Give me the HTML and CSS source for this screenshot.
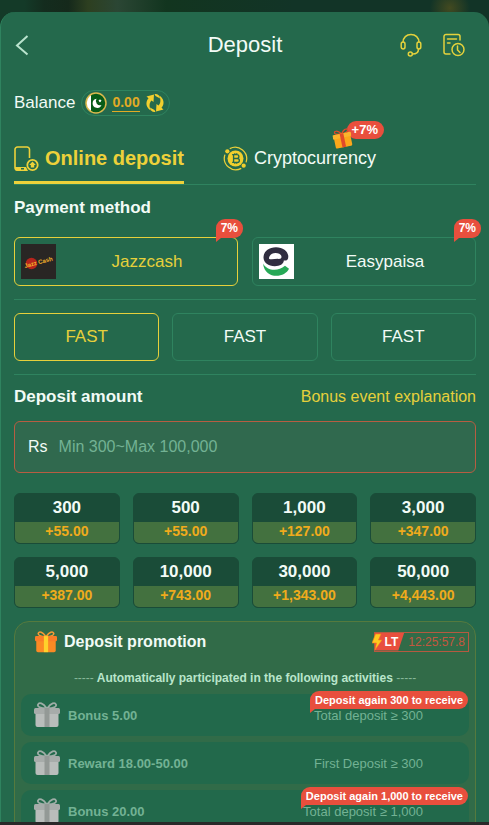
FILE: index.html
```
<!DOCTYPE html>
<html lang="en">

<head>
    <meta charset="UTF-8">
    <meta name="viewport" content="width=device-width, initial-scale=1.0">
    <title>Deposit</title>

    <link rel="stylesheet" href="styles.css">

</head>

<body>
    <svg class="sprite" aria-hidden="true">
        <symbol id="gift" viewBox="0 0 26 26">
            <path d="M12.500 6C9 1 5 0 4 2.500c-1 2.500 3 4 8.500 4zM13.500 6C17 1 21 0 22 2.500c1 2.500-3 4-8.500 4z" fill="none" stroke="currentColor" stroke-width="1.800" />
            <path d="M1.500 11h23v12a2 2 0 0 1-2 2h-19a2 2 0 0 1-2-2z" fill="var(--box)" />
            <rect x="0" y="6" width="26" height="6" rx="1.500" fill="var(--lid)" />
            <rect x="10.500" y="6" width="5" height="19" fill="var(--ribbon)" />
        </symbol>
    </svg>

    <main class="sheet">
        <header class="header">
            <button class="icon-btn" type="button" aria-label="Back">
                <svg width="16" height="22" viewBox="0 0 16 22"><path d="M13.500 2 3 11.500l10.500 9" fill="none" stroke="#b9e3cd" stroke-width="2" /></svg>
            </button>
            <h1>Deposit</h1>
            <div class="header-actions">
                <button class="icon-btn" type="button" aria-label="Support">
                    <svg width="22" height="24" viewBox="0 0 22 24" fill="none" stroke="#e3d13c" stroke-width="1.500">
                        <path d="M3 9.500C3 4.500 6.500 1.500 11 1.500s8 3 8 8" />
                        <rect x="1.200" y="9" width="3.800" height="7" rx="1.900" />
                        <rect x="17" y="9" width="3.800" height="7" rx="1.900" />
                        <path d="M18.500 16c0 3.500-1.500 5-6 5" />
                        <circle cx="10.300" cy="21" r="2" />
                    </svg>
                </button>
                <button class="icon-btn" type="button" aria-label="Deposit history">
                    <svg width="22" height="24" viewBox="0 0 22 24" fill="none" stroke="#e3d13c" stroke-width="1.500" stroke-linecap="round">
                        <path d="M7 21H3a2 2 0 0 1-2-2V3.500a2 2 0 0 1 2-2h12a2 2 0 0 1 2 2V7" />
                        <path d="M4.500 6h9M4.500 10H7" />
                        <circle cx="15" cy="16.500" r="6" />
                        <path d="M14.500 13v4l2.500 2.500" />
                    </svg>
                </button>
            </div>
        </header>

        <section class="balance">
            <span>Balance</span>
            <div class="balance-pill">
                <svg width="22" height="22" viewBox="0 0 22 22">
                    <circle cx="11" cy="11" r="10" fill="#075c18" />
                    <path d="M6 2.300v17.400A10 10 0 0 1 6 2.300z" fill="#fff" />
                    <path d="M11.500 6.800a4.600 4.600 0 1 0 5 6.200 4.200 4.200 0 0 1-5-6.200z" fill="#fff" />
                    <path d="m15 7 .5 1.100 1.200.1-.9.900.2 1.200-1-.6-1 .6.200-1.200-.9-.9 1.200-.1z" fill="#fff" />
                    <circle cx="11" cy="11" r="10" fill="none" stroke="#d9b84c" stroke-width="1.500" />
                </svg>
                <a class="balance-value" href="#">0.00</a>
                <button class="icon-btn" type="button" aria-label="Refresh balance">
                    <svg width="20" height="20" viewBox="0 0 20 20" fill="#f2cf2e">
                        <path d="M6 17.500C1 15 0 9 3.500 5.200L1.500 3.500 9 1.500 8.500 9 6.500 7.500C4 10 4 14 6 17.500z" />
                        <path d="M14 2.500c5 2.500 6 8.500 2.500 12.300l2 1.700-7.500 2 .5-7.500 2 1.500C16 10 16 6 14 2.500z" />
                        <path d="M9.500 1c3-.5 5.500 1.500 5.500 4.500L10.500 3z" />
                        <path d="M10.500 19c-3 .5-5.500-1.500-5.500-4.500L9.500 17z" />
                    </svg>
                </button>
            </div>
        </section>

        <nav class="tabs">
            <button class="tab active" type="button">
                <svg width="25" height="26" viewBox="0 0 25 26">
                    <path d="M12 24H3.500A2.500 2.500 0 0 1 1 21.500v-18A2.500 2.500 0 0 1 3.500 1h9.500A2.500 2.500 0 0 1 15.500 3.500V12" fill="none" stroke="#edd13a" stroke-width="1.600" />
                    <path d="M1 21h11l2 4H3a2 2 0 0 1-2-2z" fill="#edd13a" />
                    <rect x="7" y="22" width="3" height="1.500" fill="#24694c" />
                    <circle cx="18.500" cy="19" r="5.200" fill="none" stroke="#edd13a" stroke-width="1.800" />
                    <path d="m18.500 15.500 3.300 3.500h-1.600v2.500h-3.400V19h-1.600z" fill="#edd13a" />
                </svg>
                <span>Online deposit</span>
            </button>
            <button class="tab" type="button">
                <svg width="25" height="25" viewBox="0 0 26 26">
                    <path d="M7 2.700A12 12 0 0 1 24 17M19 23.300A12 12 0 0 1 2 9" fill="none" stroke="#e9d03a" stroke-width="1.300" />
                    <circle cx="13" cy="13" r="8.300" fill="#f0cf2d" />
                    <circle cx="4.500" cy="5.500" r="2.200" fill="#f0cf2d" />
                    <circle cx="21.500" cy="20.500" r="2.200" fill="#f0cf2d" />
                    <path d="M9.500 9h5q2 0 2 2t-2 2h-3.500 4q2 0 2 2t-2 2H9.500M11 9v8M12.300 7.500V9M14.300 7.500V9M12.300 17v1.500M14.300 17v1.500" fill="none" stroke="#24694c" stroke-width="1.400" />
                </svg>
                <span>Cryptocurrency</span>
                <span class="tab-badge">
                    <svg class="gift-small" width="19" height="19"><use href="#gift" /></svg>
                    <b>+7%</b>
                </span>
            </button>
        </nav>

        <section class="methods">
            <h2>Payment method</h2>
            <div class="method-list">
                <button class="option method active" type="button">
                    <svg width="35" height="35" viewBox="0 0 35 35">
                        <rect width="35" height="35" fill="#292624" />
                        <circle cx="10.500" cy="19.500" r="5.800" fill="#b5241d" />
                        <text class="jazz-mark" x="4" y="24" transform="rotate(-15 4 24)">Jazz Cash</text>
                    </svg>
                    <span>Jazzcash</span>
                    <b class="bubble">7%</b>
                </button>
                <button class="option method" type="button">
                    <svg width="35" height="35" viewBox="0 0 35 35">
                        <rect width="35" height="35" fill="#fff" />
                        <path d="M4 19.500c4 7.500 15 8.500 22 2.300l4 3C26 34 6 36 4 19.500z" fill="#27a957" />
                        <path d="M17 3.200c7 0 12.300 4 12.300 9.500 0 3-1.800 4.300-4.500 3.800 0 3.500-4 5.700-9 5.700-6.500 0-11.300-3.500-11.300-8.700C4.500 7.500 9.500 3.200 17 3.200z" fill="#302d40" />
                        <path d="M10 14c.5-3 3-5 6.500-5s6 1.700 6 4c0 1.300-1 2-3 1.900-3-.2-6 .8-8.300.3-.9-.2-1.300-.6-1.200-1.200z" fill="#fff" />
                    </svg>
                    <span>Easypaisa</span>
                    <b class="bubble">7%</b>
                </button>
            </div>
        </section>

        <section class="channels">
            <button class="option active" type="button">FAST</button>
            <button class="option" type="button">FAST</button>
            <button class="option" type="button">FAST</button>
        </section>

        <section class="amount">
            <div class="amount-title">
                <h2><label for="amount">Deposit amount</label></h2>
                <a href="#">Bonus event explanation</a>
            </div>
            <div class="amount-field">
                <span>Rs</span>
                <input type="text" id="amount" inputmode="numeric" placeholder="Min 300~Max 100,000">
            </div>
            <div class="amount-list">
                <button class="preset" type="button"><b>300</b><span>+55.00</span></button>
                <button class="preset" type="button"><b>500</b><span>+55.00</span></button>
                <button class="preset" type="button"><b>1,000</b><span>+127.00</span></button>
                <button class="preset" type="button"><b>3,000</b><span>+347.00</span></button>
                <button class="preset" type="button"><b>5,000</b><span>+387.00</span></button>
                <button class="preset" type="button"><b>10,000</b><span>+743.00</span></button>
                <button class="preset" type="button"><b>30,000</b><span>+1,343.00</span></button>
                <button class="preset" type="button"><b>50,000</b><span>+4,443.00</span></button>
            </div>
        </section>

        <section class="promo">
            <div class="promo-title">
                <svg class="gift-orange" width="22" height="22"><use href="#gift" /></svg>
                <h3>Deposit promotion</h3>
                <div class="timer">
                    <b>LT</b>
                    <span>12:25:57.8</span>
                    <svg class="bolt" width="10" height="18" viewBox="0 0 10 18"><path d="M3.500 1H9L6.500 7H10L3 17l1.500-7H0z" fill="#ffc91f" stroke="#f47b20" stroke-width=".6" /></svg>
                </div>
            </div>
            <p class="promo-note"><i>-----</i> Automatically participated in the following activities <i>-----</i></p>
            <ul>
                <li>
                    <svg class="gift-grey" width="26" height="26"><use href="#gift" /></svg>
                    <b>Bonus 5.00</b>
                    <span>Total deposit ≥ 300</span>
                    <b class="bubble">Deposit again 300 to receive</b>
                </li>
                <li>
                    <svg class="gift-grey" width="26" height="26"><use href="#gift" /></svg>
                    <b>Reward 18.00-50.00</b>
                    <span>First Deposit ≥ 300</span>
                </li>
                <li>
                    <svg class="gift-grey" width="26" height="26"><use href="#gift" /></svg>
                    <b>Bonus 20.00</b>
                    <span>Total deposit ≥ 1,000</span>
                    <b class="bubble">Deposit again 1,000 to receive</b>
                </li>
            </ul>
        </section>
    </main>

</body>

</html>
```
FILE: styles.css
```
:root {
    --sheet: #24694c;
    --line: #2f835f;
    --yellow: #e6d03b;
    --red: #e84f3d;
    --muted: #73b294;
}

* {
    box-sizing: border-box;
}

body {
    margin: 0;
    height: 100vh;
    display: flex;
    flex-direction: column;
    padding-top: 12px;
    border-bottom: 3px solid #292929;
    overflow: hidden;
    background:
        radial-gradient(circle at 92% 8px, #434a20 0, transparent 20px),
        linear-gradient(90deg, #143a28 5%, #142c1e 9%, #15291b 14%, #2d3f20 18%, #2b4634 24%, #12351f 34%, #123427 60%, #123427);
    font-family: "Liberation Sans", Arial, sans-serif;
    font-size: 17px;
    color: #f2fbf6;
}

button,
input {
    font: inherit;
    color: inherit;
}

button {
    padding: 0;
    border: 0;
    background: none;
    cursor: pointer;
}

svg {
    display: block;
    flex: none;
}

a {
    color: var(--yellow);
    text-decoration: none;
}

h1,
h2,
h3,
p,
ul {
    margin: 0;
    padding: 0;
}

h1 {
    font-size: 22px;
    font-weight: 400;
    text-align: center;
}

h2 {
    font-size: 17px;
    line-height: 20px;
}

h3 {
    font-size: 16px;
}

.sprite {
    display: none;
}

.sheet {
    flex: 1;
    min-height: 0;
    overflow: hidden;
    padding: 0 13px;
    border-left: 1px solid var(--line);
    border-radius: 15px 15px 0 0;
    background: var(--sheet);
}

.header {
    display: grid;
    grid-template-columns: 1fr auto 1fr;
    align-items: center;
    height: 66px;
}

.header-actions {
    display: flex;
    justify-content: flex-end;
    gap: 21px;
    padding-right: 11px;
}

.balance {
    display: flex;
    align-items: center;
    gap: 6px;
    margin-top: 12px;
}

.balance-pill {
    display: flex;
    align-items: center;
    gap: 5px;
    height: 26px;
    padding: 0 4px 0 3px;
    border: 1px solid var(--line);
    border-radius: 13px;
}

.balance-value {
    font-size: 14px;
    font-weight: 700;
    line-height: 17px;
    color: #e2ab25;
    border-bottom: 1px solid #e2ab25;
}

/* tabs */
.tabs {
    display: flex;
    gap: 39px;
    margin-top: 18px;
    border-bottom: 1px solid var(--line);
}

.tab {
    position: relative;
    display: flex;
    align-items: center;
    gap: 6px;
    height: 50px;
    padding-top: 2px;
    font-size: 18px;
    border-bottom: 3px solid transparent;
}

.tab.active {
    font-size: 20px;
    font-weight: 700;
    color: #edd13a;
    border-color: #edd13a;
}

.tab-badge {
    position: absolute;
    top: -13px;
    right: -8px;
    display: flex;
}

.tab-badge b {
    height: 18px;
    padding: 0 6px 0 5px;
    border-radius: 9px;
    background: var(--red);
    font-size: 13px;
    line-height: 18px;
    color: #fff;
}

.gift-small {
    --box: #fba71b;
    --lid: #fbb42c;
    --ribbon: #e04a2a;
    margin: 8px -5px 0 0;
    color: #e04a2a;
    transform: rotate(-12deg);
}

/* payment method */
.methods {
    padding: 13px 0;
    border-bottom: 1px solid var(--line);
}

.method-list {
    display: grid;
    grid-template-columns: 1fr 1fr;
    gap: 14px;
    margin-top: 19px;
}

.option {
    position: relative;
    height: 48px;
    border: 1px solid var(--line);
    border-radius: 6px;
}

.option.active {
    color: var(--yellow);
    border-color: var(--yellow);
}

.method {
    display: flex;
    align-items: center;
    gap: 7px;
    height: 49px;
    padding: 0 6px;
}

.method span {
    flex: 1;
}

.jazz-mark {
    font-size: 6px;
    font-weight: 700;
    fill: #f4b32a;
}

.bubble {
    position: absolute;
    top: -19px;
    right: -6px;
    height: 19px;
    padding: 0 5px;
    border-radius: 9px 9px 9px 0;
    background: var(--red);
    font-size: 12px;
    line-height: 18px;
    color: #fff;
}

.bubble::after {
    content: "";
    position: absolute;
    top: 100%;
    left: 0;
    border-top: 4px solid var(--red);
    border-right: 5px solid transparent;
}

.channels {
    display: grid;
    grid-template-columns: repeat(3, 1fr);
    gap: 13px;
    padding: 13px 0;
    border-bottom: 1px solid var(--line);
}

/* amount */
.amount-title {
    display: flex;
    justify-content: space-between;
    align-items: center;
    margin-top: 12px;
}

.amount-title a {
    font-size: 16px;
}

.amount-field {
    display: flex;
    align-items: center;
    gap: 11px;
    height: 52px;
    margin: 14px 0 20px;
    padding: 0 13px;
    border: 1px solid #b75d42;
    border-radius: 6px;
    background: #30694e;
    font-size: 16px;
}

.amount-field input {
    flex: 1;
    min-width: 0;
    padding: 0;
    border: 0;
    outline: 0;
    background: none;
}

.amount-field input::placeholder {
    color: var(--muted);
    opacity: 1;
}

.amount-list {
    display: grid;
    grid-template-columns: repeat(4, 1fr);
    gap: 13px;
}

.preset {
    display: flex;
    flex-direction: column;
    height: 51px;
    overflow: hidden;
    border: 1px solid #1a4c38;
    border-radius: 6px;
    background: #1a4c38;
}

.preset b,
.preset span {
    width: 100%;
}

.preset b {
    line-height: 28px;
}

.preset span {
    flex: 1;
    background: #43713f;
    font-size: 14px;
    font-weight: 700;
    line-height: 19px;
    color: #f0ab1c;
}

/* promotion */
.promo {
    margin-top: 13px;
    padding: 0 6px;
    border: 1px solid #557a3e;
    border-radius: 15px;
    background: #316b48;
}

.promo-title {
    display: flex;
    align-items: center;
    gap: 7px;
    height: 39px;
    padding-left: 14px;
}

.gift-orange {
    --box: #fb8a24;
    --lid: #fa7d28;
    --ribbon: #ffd12b;
    color: #f79a35;
}

.timer {
    position: relative;
    display: flex;
    height: 20px;
    margin-left: auto;
    border: 1px solid #b55a40;
    font-size: 12px;
    line-height: 18px;
    color: #c4573f;
}

.timer b {
    padding: 0 6px 0 10px;
    background: var(--red);
    clip-path: polygon(0 0, 100% 0, 80% 100%, 0 100%);
    color: #fff;
}

.timer span {
    padding: 0 3px 0 4px;
}

.bolt {
    position: absolute;
    top: 0;
    left: -3px;
}

.promo-note {
    padding: 10px 0 9px;
    font-size: 12px;
    font-weight: 700;
    line-height: 14px;
    text-align: center;
    color: #b9e5cb;
}

.promo-note i {
    font-style: normal;
    font-weight: 400;
    color: #86b898;
}

.promo ul {
    display: grid;
    gap: 6px;
    padding-bottom: 6px;
    list-style: none;
}

.promo li {
    position: relative;
    display: flex;
    align-items: center;
    gap: 8px;
    height: 42px;
    padding: 0 46px 0 13px;
    border-radius: 10px;
    background: #22694b;
    font-size: 13px;
    color: var(--muted);
}

.promo li span {
    margin-left: auto;
}

.promo .bubble {
    top: -3px;
    right: 1px;
    height: 18px;
    font-size: 11px;
}

.gift-grey {
    --box: #b9bdbb;
    --lid: #a7acaa;
    --ribbon: #939996;
    color: #9fada7;
}
```
